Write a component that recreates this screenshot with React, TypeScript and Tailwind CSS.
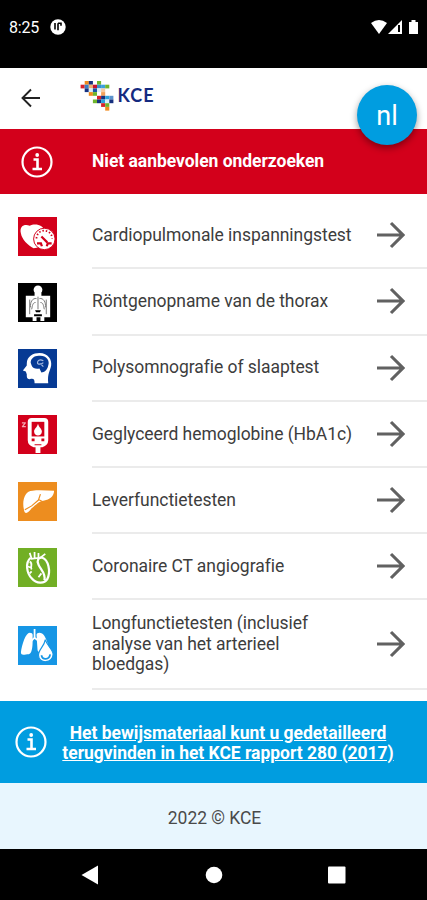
import React from 'react';

interface TestItem {
  label: string;
  color: string;
  height: string;
  icon: React.ReactNode;
}

const LOGO_CELLS: [number, number, string][] = [
  [1, 0, '#f08a1d'], [2, 0, '#16307f'], [4, 0, '#6fb52c'],
  [0, 1, '#d8232a'], [1, 1, '#3a7fc4'], [2, 1, '#f0b070'], [3, 1, '#c8102e'], [4, 1, '#3a90cc'], [5, 1, '#3aa0dc'], [6, 1, '#6fb52c'],
  [1, 2, '#16307f'], [2, 2, '#d9eefa'], [3, 2, '#1b55a5'], [4, 2, '#d9eefa'], [5, 2, '#f6c9a0'],
  [2, 3, '#f08a1d'], [3, 3, '#6fb52c'], [5, 3, '#f3a05a'],
  [4, 4, '#d8232a'], [5, 4, '#16307f'], [6, 4, '#2aa3df'], [7, 4, '#5c93cc'],
  [3, 5, '#6fb52c'], [4, 5, '#16307f'], [5, 5, '#2aa3df'], [6, 5, '#d9eefa'], [7, 5, '#16307f'],
  [5, 6, '#d8232a'], [6, 6, '#6fb52c'],
  [6, 7, '#f08a1d'],
];

const Logo = () => (
  <svg className="h-[30px] w-[75px]" viewBox="0 0 75 30">
    {LOGO_CELLS.map(([col, row, fill]) => (
      <rect key={`${col}-${row}`} x={0.6 + col * 4.1} y={row * 3.7} width="4.1" height="3.7" fill={fill} />
    ))}
    <text
      x="37.5"
      y="21"
      fill="#142a80"
      fontFamily="Lato, sans-serif"
      fontWeight="700"
      fontSize="18"
      textLength="36"
    >
      KCE
    </text>
  </svg>
);

const InfoIcon = () => (
  <svg className="size-8 shrink-0" viewBox="0 0 32 32" fill="none" stroke="white">
    <circle cx="16" cy="16" r="14.5" strokeWidth="2.2" />
    <path d="M12.5 13.5h4v9M11.5 23h9.5" strokeWidth="2.6" />
    <circle cx="16.2" cy="9" r="1.9" fill="white" stroke="none" />
  </svg>
);

const ArrowRight = () => (
  <svg className="h-7 w-7 shrink-0" viewBox="0 0 28 28" fill="none" stroke="#616161" strokeWidth="3.1">
    <path d="M0 14h26M14 2 26 14 14 26" />
  </svg>
);

const HeartGaugeIcon = () => (
  <>
    <path fill="white" d="M3 17C1 9 7 7 12 9c5-3 15-1 15 6l-5 16-6 1C10 29 4 23 3 17Z" />
    <circle cx="27" cy="22.5" r="11" fill="white" stroke="#d3001b" strokeWidth="1" />
    <path d="M19 22a8 8 0 0 1 16 0" fill="none" stroke="#d3001b" strokeWidth="1.8" strokeDasharray="1.5 2" />
    <path d="m24 20 6 6M19.5 27h4l1 3M34.5 27h-4l-1 3" fill="none" stroke="#d3001b" strokeWidth="2.3" />
  </>
);

const ThoraxIcon = () => (
  <>
    <circle cx="20.5" cy="7" r="4.5" fill="white" />
    <path fill="white" d="M8 13h9v-3h7v3h9v22h-6v4h-4v-4h-4v4h-4v-4H8Z" />
    <path
      d="M12 17v15M29 17v15M20.5 14v13M19 16c-4-1-7 4-6 9M22 16c4-1 7 4 6 9M18 20c-3 0-3 3-4 7M23 20c3 0 3 3 4 7"
      fill="none"
      stroke="#777"
      strokeWidth="1"
    />
    <path d="M17.5 28h6l-1 2h-4ZM16.5 32h8v2h-8Z" fill="black" />
  </>
);

const BrainIcon = () => (
  <>
    <path fill="white" d="M9 15C9 7 16 4 22 4c9 0 13 7 12 13-1 6-4 8-3 18H17c0-4-1-5-5-4-3 0-3-2-3-5l-1-3-3-1 4-5Z" />
    <path fill="#063a94" d="M13 14c0-5 5-8 10-7 6 0 10 5 8 10-1 5-4 7-7 7l-2-4c-3 1-7 0-8-3Z" />
    <path d="M26 12c-4-2-6 0-6 2s4 2 6 0M23 15l3 3" fill="none" stroke="#a9bce0" strokeWidth="1.2" />
  </>
);

const GlucoseIcon = () => (
  <>
    <path fill="white" d="M14 3h13q4 0 4 4v19q0 5-6 7h-2v6h-5v-6h-2q-6-2-6-7V7q0-4 4-4Z" />
    <rect x="14" y="7" width="13" height="15" fill="#d3001b" />
    <path fill="white" d="M20.5 9c1 4 4 5 4 8s-2 4-4 4-4-1-4-4 3-4 4-8Z" />
    <path fill="#d3001b" d="M14 24h3v3h-3ZM24 24h3v3h-3ZM17 30h7v1h-7Z" />
    <path d="M4 8h4M7.5 8 4.5 12M4 12h4" fill="none" stroke="#f3a8b0" strokeWidth="1.2" />
  </>
);

const LiverIcon = () => (
  <>
    <path fill="white" d="M6 28C4 19 7 9 15 9c7-1 15 0 22 0 0 6-5 9-10 10-6 1-8 4-13 8-3 4-7 8-8 1Z" />
    <path d="m7 28.5 7-4 7-6 2-6M21 18l4 2" fill="none" stroke="#ed8d1f" strokeWidth="1.2" />
  </>
);

const CoronaryIcon = () => (
  <g fill="none" stroke="white" strokeWidth="2.3">
    <path d="M13 10c-6 5-4 16 1 21 5 6 13 6 16 1 4-8 1-20-5-22-4-1-6 3-4 7 2 5 8 9 6 16" />
    <path d="m12 5 2 6 9-1 5-4M17 4v7M21 5v5M12 14c4 2 0 5 2 8M10 19l3 1M14 24l-2 2M24 26l-3 4" strokeWidth="1.8" />
  </g>
);

const LungsIcon = () => (
  <>
    <path fill="white" d="M15 9v7c0 6-1 13-4 13-4 0-8 2-8-2C4 19 8 7 12 7c2 0 3 1 3 2ZM19 9c0-3 6-3 8 1 3 5 5 12 4 17-3 2-11 1-11-3Z" />
    <path d="M17 3v9l-4 4M17 12l5 4" fill="none" stroke="white" strokeWidth="1.8" />
    <path fill="white" stroke="#1696e5" strokeWidth="1.2" d="M28 14c2 7 8 10 8 15 0 10-15 10-15 1 0-6 6-9 7-16Z" />
    <path d="M24 30c1 5 8 5 9-1" fill="none" stroke="#1696e5" strokeWidth="1.8" />
  </>
);

const TESTS: TestItem[] = [
  { label: 'Cardiopulmonale inspanningstest', color: 'bg-[#d3001b]', height: 'h-[66.2px]', icon: <HeartGaugeIcon /> },
  { label: 'Röntgenopname van de thorax', color: 'bg-black', height: 'h-[66.2px]', icon: <ThoraxIcon /> },
  { label: 'Polysomnografie of slaaptest', color: 'bg-[#063a94]', height: 'h-[66.2px]', icon: <BrainIcon /> },
  { label: 'Geglyceerd hemoglobine (HbA1c)', color: 'bg-[#d3001b]', height: 'h-[66.2px]', icon: <GlucoseIcon /> },
  { label: 'Leverfunctietesten', color: 'bg-[#ed8d1f]', height: 'h-[66.2px]', icon: <LiverIcon /> },
  { label: 'Coronaire CT angiografie', color: 'bg-[#72af25]', height: 'h-[66.2px]', icon: <CoronaryIcon /> },
  {
    label: 'Longfunctietesten (inclusief analyse van het arterieel bloedgas)',
    color: 'bg-[#1696e5]',
    height: 'h-[89.5px]',
    icon: <LungsIcon />,
  },
];

const StatusBar = () => (
  <div className="flex h-[68px] shrink-0 items-start bg-black pt-[18px] pr-[7px] pl-[9px] text-white">
    <span className="w-[41px] text-[16px] leading-5 tracking-[-0.2px]">8:25</span>
    <svg className="mt-px size-4" viewBox="0 0 16 16">
      <circle cx="8" cy="8" r="7.7" fill="white" />
      <path d="M5 4v6.5M8 4.3v7M8 4.3h3v2.5" fill="none" stroke="black" strokeWidth="1.6" />
    </svg>
    <svg className="mt-px ml-auto h-4 w-[50px]" viewBox="0 0 50 16" fill="white">
      <path d="M1 4q8-6 16 0L9 15Z" />
      <path d="M32 1v14H18Z" />
      <path d="M28 6h2v7h-2Z" fill="black" />
      <path d="M39 3h2.5V1h4v2H48v12h-9Z" />
    </svg>
  </div>
);

const Header = () => (
  <header className="relative flex h-[61px] shrink-0 items-start bg-white">
    <svg className="mt-5 ml-[21px] size-5" viewBox="0 0 20 20" fill="none" stroke="#222" strokeWidth="1.9">
      <path d="M19 10H2M10 1.5 1.5 10l8.5 8.5" />
    </svg>
    <div className="mt-[13px] ml-[39px]">
      <Logo />
    </div>
    <button className="absolute top-[17px] right-[10px] size-[60px] rounded-full bg-[#009de0] pt-0.5 text-[27px] text-white shadow-[0_3px_7px_rgba(0,0,0,0.4)]">
      nl
    </button>
  </header>
);

const TestRow = ({ item }: { item: TestItem }) => (
  <li className={`flex items-center pl-[18px] ${item.height}`}>
    <svg className={`size-[39px] shrink-0 ${item.color}`} viewBox="0 0 40 40">
      {item.icon}
    </svg>
    <div className="ml-[35px] flex h-full flex-1 items-center border-b-2 border-[#ebebeb] pr-[22px]">
      <span className="w-[266px] text-[17.5px] leading-[20.5px] tracking-[-0.05px] text-[#3d3d3d]">{item.label}</span>
      <span className="ml-auto">
        <ArrowRight />
      </span>
    </div>
  </li>
);

export default function App() {
  return (
    <div className="flex h-[900px] w-[427px] flex-col overflow-hidden bg-white font-[Roboto,sans-serif]">
      <StatusBar />
      <Header />
      <div className="flex h-[65px] shrink-0 items-center bg-[#d3001b] pl-[21px]">
        <InfoIcon />
        <h1 className="ml-[39px] text-[17.5px] font-bold tracking-[-0.04px] text-white">Niet aanbevolen onderzoeken</h1>
      </div>
      <ul className="h-[507px] shrink-0 pt-[9.2px]">
        {TESTS.map((item) => (
          <TestRow key={item.label} item={item} />
        ))}
      </ul>
      <div className="flex h-[82px] shrink-0 items-center bg-[#009de0] pl-[15px]">
        <InfoIcon />
        <a className="ml-[11px] w-[340px] pt-0.5 text-center text-[17.5px] leading-[20.5px] font-bold tracking-[-0.02px] text-white underline">
          Het bewijsmateriaal kunt u gedetailleerd terugvinden in het KCE rapport 280 (2017)
        </a>
      </div>
      <footer className="flex h-[66px] shrink-0 items-center justify-center bg-[#e8f6fe] pt-1 pl-0.5 text-[17.5px] tracking-[-0.05px] text-[#4a4a4a]">
        2022 © KCE
      </footer>
      <nav className="flex flex-1 items-center bg-black">
        <svg className="h-5 w-full" viewBox="0 0 427 20" fill="white">
          <path d="M81.5 10 98 .5v19Z" />
          <circle cx="214" cy="10" r="8.3" />
          <rect x="328" y="1.5" width="17.5" height="17" rx="1" />
        </svg>
      </nav>
    </div>
  );
}
